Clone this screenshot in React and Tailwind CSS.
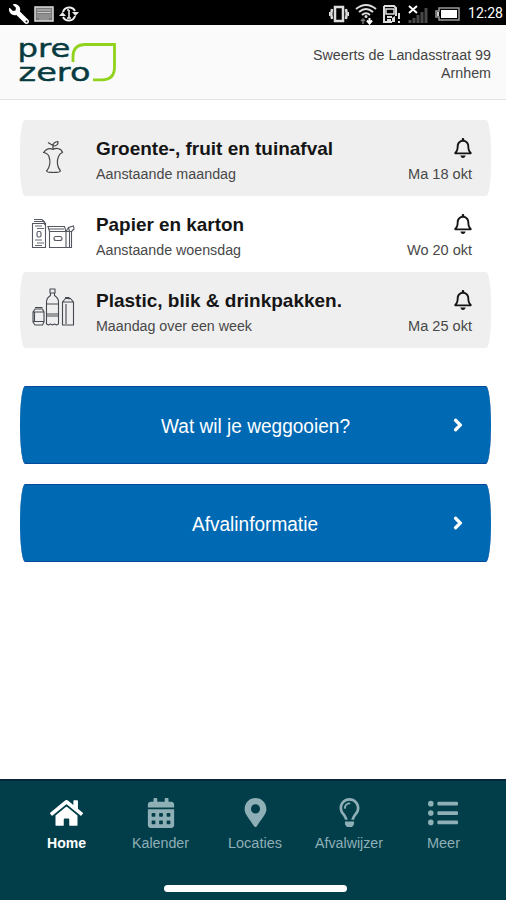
import { FaWrench, FaRegBell, FaChevronRight, FaHome, FaCalendarAlt, FaMapMarkerAlt, FaRegLightbulb, FaListUl } from "react-icons/fa";

const pickups = [
  { title: "Groente-, fruit en tuinafval", titleWidth: 237, when: "Aanstaande maandag", whenWidth: 140, date: "Ma 18 okt", dateWidth: 64, icon: <AppleIcon />, shaded: true },
  { title: "Papier en karton", titleWidth: 148, when: "Aanstaande woensdag", whenWidth: 145, date: "Wo 20 okt", dateWidth: 65, icon: <PaperIcon />, shaded: false },
  { title: "Plastic, blik & drinkpakken.", titleWidth: 246, when: "Maandag over een week", whenWidth: 156, date: "Ma 25 okt", dateWidth: 64, icon: <PlasticIcon />, shaded: true },
];

const tabs = [
  { label: "Home", width: 39, icon: <FaHome className="w-[33px] h-[30px]" />, active: true },
  { label: "Kalender", width: 57, icon: <FaCalendarAlt className="w-[30px] h-[30px]" /> },
  { label: "Locaties", width: 54, icon: <FaMapMarkerAlt className="w-[29px] h-[29px]" /> },
  { label: "Afvalwijzer", width: 68, icon: <FaRegLightbulb className="w-[29px] h-[29px]" /> },
  { label: "Meer", width: 33, icon: <FaListUl className="w-[30px] h-[30px]" /> },
];

export default function App() {
  return (
    <div className="w-[506px] h-[900px] bg-white flex flex-col overflow-hidden font-['Liberation_Sans',sans-serif]">
      <StatusBar />

      {/* Header */}
      <header className="h-[75px] shrink-0 bg-[#fafafa] border-b border-[#e2e2e2] flex justify-between pl-[18px] pr-[15px]">
        <Logo />
        <div className="pt-[22px] flex flex-col items-end text-[#444]">
          <FitText text="Sweerts de Landasstraat 99" width={178} size={14} height={18} />
          <FitText text="Arnhem" width={50} size={14} height={18} />
        </div>
      </header>

      <main className="flex-1 pl-5 pr-[15px] pt-5">
        {pickups.map((item) => (
          <PickupRow key={item.title} {...item} />
        ))}
        <div className="mt-[38px] flex flex-col gap-5">
          <ActionButton label="Wat wil je weggooien?" width={189} />
          <ActionButton label="Afvalinformatie" width={126} />
        </div>
      </main>

      {/* Bottom navigation */}
      <nav className="h-[121px] shrink-0 bg-[#023e4a] border-t-2 border-[#06263c] flex flex-col items-center pl-1">
        <div className="w-[471px] flex pt-4">
          {tabs.map((tab) => (
            <button key={tab.label} className={`flex-1 flex flex-col items-center ${tab.active ? "text-white" : "text-[#8eafb6]"}`}>
              <span className="h-[31px] flex items-center">{tab.icon}</span>
              <span className="mt-[7px]">
                <FitText text={tab.label} width={tab.width} size={14} height={18} bold={tab.active} />
              </span>
            </button>
          ))}
        </div>
        <div className="mt-8 w-[183px] h-[7px] rounded-full bg-white" />
      </nav>
    </div>
  );
}

// Single text line set to an exact width
function FitText({ text, width, size, height, bold }) {
  return (
    <svg width={width} height={height} className="block overflow-visible" fill="currentColor">
      <text x="0" y={Math.floor(height / 2 + size * 0.33)} fontSize={size} fontWeight={bold ? 700 : 400} textLength={width} lengthAdjust="spacingAndGlyphs">
        {text}
      </text>
    </svg>
  );
}

function PickupRow({ title, titleWidth, when, whenWidth, date, dateWidth, icon, shaded }) {
  return (
    <div className={`h-[76px] flex items-start rounded-[5px/40%] ${shaded ? "bg-[#efefef]" : "bg-white"}`}>
      <div className="w-[76px] h-full pl-[11px] shrink-0">{icon}</div>
      <div className="flex-1 pt-[17px]">
        <div className="text-[#151515]">
          <FitText text={title} width={titleWidth} size={19} height={24} bold />
        </div>
        <div className="mt-[5px] text-[#484848]">
          <FitText text={when} width={whenWidth} size={14} height={18} />
        </div>
      </div>
      <div className="pt-[18px] pr-[19px] flex flex-col items-end text-[#484848]">
        <FaRegBell className="w-[18px] h-5 text-[#151515]" />
        <div className="mt-2">
          <FitText text={date} width={dateWidth} size={14} height={18} />
        </div>
      </div>
    </div>
  );
}

function ActionButton({ label, width }) {
  return (
    <button className="w-full h-[78px] bg-[#0069b4] border-y border-[#07489a] rounded-[5px/50%] text-white flex items-center pr-[26px]">
      <span className="flex-1 flex justify-center pl-[39px] pt-[3px]">
        <FitText text={label} width={width} size={20} height={26} />
      </span>
      <FaChevronRight className="w-[14px] h-[14px] stroke-white [stroke-width:40]" />
    </button>
  );
}

function StatusBar() {
  return (
    <div className="h-[25px] shrink-0 bg-black text-white flex items-center justify-between pl-[9px] pr-[3px]">
      <div className="flex items-center gap-[5px] pt-[2px]">
        <FaWrench className="w-5 h-5 -scale-x-100" />
        <svg width="20" height="16" viewBox="0 0 20 16">
          <rect x="1" y="1" width="18" height="14" fill="#777" stroke="#ddd" strokeWidth="1.5" />
          <path d="M3 4h14M3 6.5h14" stroke="#ccc" />
          <path d="M3 9h14M3 11h14M5 13h10" stroke="#aaa" />
        </svg>
        <svg width="20" height="18" viewBox="0 0 20 18" fill="none" stroke="#eee" strokeWidth="2">
          <path d="M4 7a6.5 6.5 0 0 1 12-1M16 11a6.5 6.5 0 0 1-12 1" />
          <path d="M0 11l3.5-4 3.5 4zM13 7l3.5 4L20 7z" fill="#eee" stroke="none" />
          <path d="M10 5v8M8 5h2M8 13h4" strokeWidth="1.6" />
        </svg>
      </div>
      <div className="flex items-center pt-[2px]">
        <svg width="20" height="18" viewBox="0 0 20 18" fill="none" stroke="#ddd">
          <rect x="6" y="2" width="8" height="14" strokeWidth="2.5" />
          <path d="M3 4q-1.5 5 0 10M17 4q1.5 5 0 10" strokeWidth="2.5" />
          <path d="M0.7 7v4M19.3 7v4" strokeWidth="1.4" />
        </svg>
        <svg className="ml-[6px]" width="22" height="22" viewBox="0 0 22 22" fill="none" stroke="#ddd" strokeWidth="2">
          <path d="M1 6q10-8 20 0M4 9q7-6 14 0M7 12q4-3.5 8 0" />
          <circle cx="11" cy="13.5" r="1.5" fill="#ddd" stroke="none" />
          <path d="M8 21v-5M6 18l2-2 2 2" stroke="#777" strokeWidth="1.5" />
          <path d="M14.5 15v5M12 17.5l2.5 3 2.5-3" stroke="#fff" />
        </svg>
        <svg className="ml-[5px]" width="20" height="20" viewBox="0 0 20 20" fill="none" stroke="#ddd">
          <path d="M2 2h10l2 2v8M2 2v16h8" strokeWidth="2" />
          <path d="M4 5h8v5H4z" strokeWidth="1.5" />
          <path d="M5 12h5v2H5zM5 15h4v2H5zM10 14l3-2v6h-3z" fill="#ddd" stroke="none" />
          <path d="M17 9v6M17 17v2" strokeWidth="2" />
        </svg>
        <svg className="ml-[6px]" width="22" height="20" viewBox="0 0 22 20">
          <path d="M1 2l8 7M9 2l-8 7" stroke="#fff" strokeWidth="2" />
          <path d="M2 16v3M6 14v5M10 11v8M14 8v11M18 4v15" stroke="#484848" strokeWidth="3" />
        </svg>
        <svg className="ml-[5px]" width="25" height="14" viewBox="0 0 25 14">
          <path d="M4 1h20v12H4v-3H1V4h3z" fill="none" stroke="#999" strokeWidth="1.5" />
          <path d="M6 3h16v8H6z" fill="#fff" />
          <path d="M2 5h2v4H2z" fill="#ccc" />
        </svg>
        <span className="ml-[8px] pt-px font-[Roboto,sans-serif]">
          <FitText text="12:28" width={35} size={15} height={20} />
        </span>
      </div>
    </div>
  );
}

function Logo() {
  return (
    <svg className="mt-[10px] overflow-visible" width="100" height="56" viewBox="18 35 100 56">
      <g fill="#073b40" stroke="#073b40" strokeWidth="0.4" fontFamily="DejaVu Sans" fontSize="25">
        <text x="17.5" y="57.3" textLength="53" lengthAdjust="spacingAndGlyphs">pre</text>
        <text x="18.5" y="81" textLength="72" lengthAdjust="spacingAndGlyphs">zero</text>
      </g>
      <path d="M73 62V57Q73 44.5 85.5 44.5H114.5V67Q114.5 79.8 102 79.8H93" fill="none" stroke="#90d21c" strokeWidth="2.8" />
    </svg>
  );
}

function AppleIcon() {
  return (
    <svg width="44" height="76" viewBox="31 120 44 76" fill="none" stroke="#444" strokeWidth="1.2" strokeLinejoin="round">
      <path d="M53 149.5C50 147.5 46 149 43.5 152.5C46 153 48 154 49 156.5C50.5 161 50 167 46.5 171C48.5 173.5 51 172 53.5 172.5C56 172 58.5 173.5 60.5 171C57 167 56.5 161 58.5 156.5C59.5 154 61 153 62.5 152.5C61.5 148.5 56.5 147.5 53 149.5Z" />
      <path d="M53 149V145.5L48 142.5M53 146Q53 142 58 141.5Q58.5 146 53 146" />
    </svg>
  );
}

function PaperIcon() {
  return (
    <svg width="44" height="76" viewBox="31 196 44 76" fill="none" stroke="#555762" strokeWidth="1.1">
      <path d="M32.5 223.5h11.5l1.5 2v22H32.5zM34 221.5h9.5l2 2v3M34 219.5h8l3 3" />
      <path d="M35 226h7M37 228.5h7M35 240h7M37 243h7M35 245.5h7" strokeWidth="0.9" />
      <rect x="37" y="231.5" width="4" height="5.5" rx="1.5" />
      <path d="M49.5 231.5h22v16h-22zM49.5 231.5l-1.5-5h16.5l1.5 5l2.5-4M49 229h15M66 231.5v16M69.5 231.5v16M69.5 231.5l-1-4 5-1.5 0.5 3-2.5 2.5" />
      <rect x="54" y="236.5" width="8" height="4" rx="2" />
    </svg>
  );
}

function PlasticIcon() {
  return (
    <svg width="44" height="76" viewBox="31 272 44 76" fill="none" stroke="#444850" strokeWidth="1.1" strokeLinejoin="round">
      <path d="M35 309h7.5l1.5 3v10l-1.5 3H35l-2-3v-10zM35 307.5h7.5M33 312h11M33 321.5h11M34.5 312v10" />
      <path d="M50 289h5v4h-5zM50.5 293v2.5Q46.5 298 46.5 302v22l2 1 2-1 2 1 2-1 2 1 2-1v-22Q58.5 298 54.5 295.5V293M46.5 304h12M46.5 314h12M46.5 316h12" />
      <path d="M62.5 302l3-3.5h5l3 3.5v23h-11zM62 302h12M65 297.5h4v2M66 304v20" />
    </svg>
  );
}
